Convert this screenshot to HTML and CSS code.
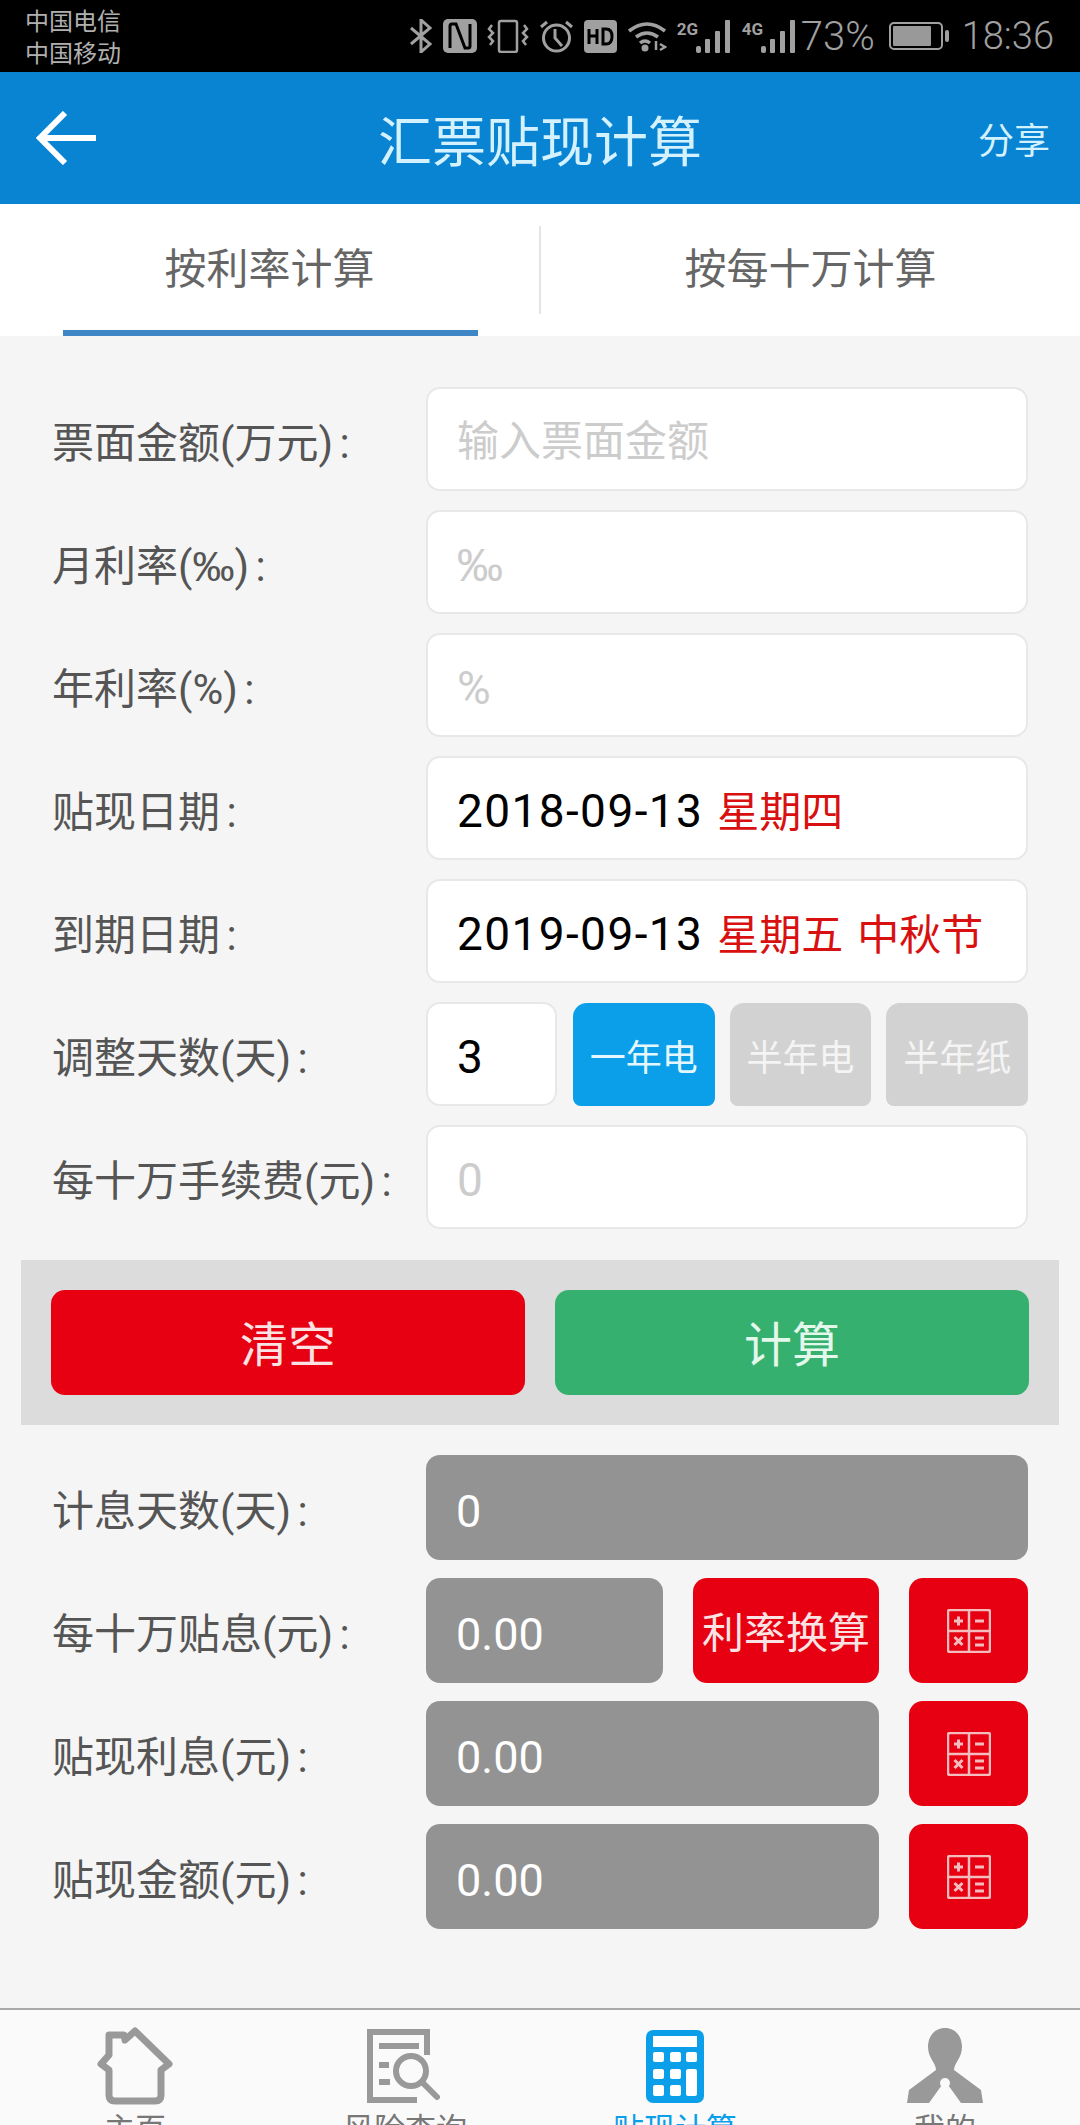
FILE: index.html
```html
<!DOCTYPE html>
<html lang="zh-CN">
<head>
    <meta charset="UTF-8">
    <meta name="viewport" content="width=device-width, initial-scale=1.0">
    <title>汇票贴现计算</title>
    <link rel="stylesheet" href="styles.css">
</head>
<body>
    <div class="app">
        <!-- 状态栏 -->
        <div class="status-bar">
            <div class="carriers">
                <div>中国电信</div>
                <div>中国移动</div>
            </div>
            <div class="status-icons">
                <svg width="24" height="34" viewBox="0 0 24 34" fill="none" stroke="#a0a0a0" stroke-width="3"><path d="M2 9 21 25 12 33V1l9 8L2 25"/></svg>
                <svg width="34" height="34" viewBox="0 0 34 34"><rect width="34" height="34" rx="5" fill="#a0a0a0"/><path d="M7 29V7q0-2 2-2h4l9 24h3q2 0 2-2V5" fill="none" stroke="#000" stroke-width="3"/></svg>
                <svg width="42" height="34" viewBox="0 0 42 34" fill="none" stroke="#a0a0a0" stroke-width="2.5"><rect x="12" y="2" width="18" height="31" rx="2"/><path d="M5 6 2 10l4 4-4 4 4 4-3 4M37 6l3 4-4 4 4 4-4 4 3 4"/></svg>
                <svg width="35" height="34" viewBox="0 0 35 34" fill="none" stroke="#a0a0a0" stroke-width="3"><circle cx="17.500" cy="19" r="13"/><path d="M16 10v9l7 8M2 8l6-5M33 8l-6-5"/></svg>
                <svg width="33" height="33" viewBox="0 0 33 33"><rect width="33" height="33" rx="4" fill="#a0a0a0"/><path d="M5 9v15M13 9v15M5 16h8M19 9v15h3q6 0 6-7.500T22 9z" fill="none" stroke="#000" stroke-width="3"/></svg>
                <svg width="40" height="32" viewBox="0 0 40 32" fill="none" stroke="#a0a0a0" stroke-width="3.500"><path d="M2 11q18-14 36 0M9 17q11-8 22 0M13 23q5-4 10 0"/><circle cx="18" cy="28" r="3.500" fill="#a0a0a0" stroke="none"/><path d="M29 21v9M33 24l5 3-5 3" stroke-width="2.500"/></svg>
                <div class="net">
                    <span>2G</span>
                    <svg width="36" height="33" viewBox="0 0 36 33" fill="#a0a0a0"><rect y="26" width="5" height="7" rx="2"/><rect x="9" y="19" width="5" height="14" rx="1"/><rect x="19" y="11" width="5" height="22" rx="1"/><rect x="29" width="5" height="33" rx="1"/></svg>
                </div>
                <div class="net">
                    <span>4G</span>
                    <svg width="36" height="33" viewBox="0 0 36 33" fill="#a0a0a0"><rect y="26" width="5" height="7" rx="2"/><rect x="9" y="19" width="5" height="14" rx="1"/><rect x="19" y="11" width="5" height="22" rx="1"/><rect x="29" width="5" height="33" rx="1"/></svg>
                </div>
                <span class="battery-text">73%</span>
                <svg width="60" height="28" viewBox="0 0 60 28"><rect x="1" y="1" width="52" height="26" rx="4" fill="none" stroke="#a0a0a0" stroke-width="2"/><rect x="4" y="4" width="38" height="20" rx="1" fill="#999"/><rect x="56" y="8" width="4" height="12" rx="2" fill="#a0a0a0"/></svg>
                <span class="time">18:36</span>
            </div>
        </div>

        <!-- 标题栏 -->
        <div class="header">
            <svg class="back" width="62" height="54" viewBox="0 0 62 54" fill="none" stroke="#fff" stroke-width="6"><path d="M60 27H4M29 2 4 27l25 25"/></svg>
            <h1>汇票贴现计算</h1>
            <a class="share">分享</a>
        </div>

        <!-- 切换 -->
        <div class="tabs">
            <div class="tab active">按利率计算</div>
            <div class="tab">按每十万计算</div>
        </div>

        <div class="main">
            <form class="rows">
                <div class="row"><label>票面金额(万元) :</label><div class="field hint">输入票面金额</div></div>
                <div class="row"><label>月利率(<span class="permille">‰</span>) :</label><div class="field hint latin"><span class="permille">‰</span></div></div>
                <div class="row"><label>年利率(%) :</label><div class="field hint latin">%</div></div>
                <div class="row"><label>贴现日期 :</label><div class="field"><span class="num">2018-09-13</span><em>星期四</em></div></div>
                <div class="row"><label>到期日期 :</label><div class="field"><span class="num">2019-09-13</span><em>星期五</em><em>中秋节</em></div></div>
                <div class="row">
                    <label>调整天数(天) :</label>
                    <div class="field days"><span class="num">3</span></div>
                    <button type="button" class="type on">一年电</button>
                    <button type="button" class="type">半年电</button>
                    <button type="button" class="type">半年纸</button>
                </div>
                <div class="row"><label>每十万手续费(元) :</label><div class="field hint latin">0</div></div>
            </form>

            <div class="actions">
                <button type="button" class="btn red">清空</button>
                <button type="button" class="btn green">计算</button>
            </div>

            <div class="rows results">
                <div class="row"><label>计息天数(天) :</label><div class="value">0</div></div>
                <div class="row">
                    <label>每十万贴息(元) :</label>
                    <div class="value">0.00</div>
                    <button type="button" class="convert">利率换算</button>
                    <button type="button" class="calc"><svg width="44" height="44" viewBox="0 0 44 44"><use href="#calc-icon"/></svg></button>
                </div>
                <div class="row">
                    <label>贴现利息(元) :</label>
                    <div class="value">0.00</div>
                    <button type="button" class="calc"><svg width="44" height="44" viewBox="0 0 44 44"><use href="#calc-icon"/></svg></button>
                </div>
                <div class="row">
                    <label>贴现金额(元) :</label>
                    <div class="value">0.00</div>
                    <button type="button" class="calc"><svg width="44" height="44" viewBox="0 0 44 44"><use href="#calc-icon"/></svg></button>
                </div>
            </div>
        </div>

        <!-- 底部导航 -->
        <div class="nav">
            <div class="nav-item">
                <svg width="76" height="78" viewBox="0 0 76 78" fill="none" stroke="#999" stroke-width="7" stroke-linejoin="round"><path d="M12 43 4 37l8-9V8h15l1 5 10-9 34 33-8 6v25q0 6-6 6H18q-6 0-6-6z"/></svg>
                <span>主页</span>
            </div>
            <div class="nav-item">
                <svg width="76" height="78" viewBox="0 0 76 78" fill="none" stroke="#999" stroke-width="6"><path d="M60 28V5H3v68h47"/><path d="M12 19h40M12 38h10M12 55h11"/><circle cx="44" cy="44" r="15"/><path d="M55 55l15 15" stroke-linecap="round"/></svg>
                <span>风险查询</span>
            </div>
            <div class="nav-item current">
                <svg width="76" height="78" viewBox="0 0 76 78"><g transform="translate(9 3)"><rect width="58" height="73" rx="7" fill="#0a9fe8"/><g fill="#fff"><rect x="7" y="6" width="44" height="11"/><rect x="7" y="22" width="11" height="10" rx="2"/><rect x="24" y="22" width="11" height="10" rx="2"/><rect x="40" y="22" width="11" height="10" rx="2"/><rect x="7" y="39" width="11" height="10" rx="2"/><rect x="24" y="39" width="11" height="10" rx="2"/><rect x="40" y="39" width="11" height="27" rx="2"/><rect x="7" y="55" width="11" height="11" rx="2"/><rect x="24" y="55" width="11" height="11" rx="2"/></g></g></svg>
                <span>贴现计算</span>
            </div>
            <div class="nav-item">
                <svg width="76" height="78" viewBox="0 0 76 78"><path d="M38 1c11 0 17 9 17 19 0 11-8 16-8 23l27 20 2 13H54L44 62l-6-8-6 8-10 14H0l2-13 27-20c0-7-8-12-8-23C21 10 27 1 38 1z" fill="#999"/><circle cx="38" cy="56" r="5" fill="#fafafa"/></svg>
                <span>我的</span>
            </div>
        </div>
    </div>

    <svg class="defs" width="0" height="0">
        <symbol id="calc-icon" viewBox="0 0 44 44">
            <g fill="none" stroke="#f5bcbd" stroke-width="2.500">
                <rect x="1" y="1" width="42" height="42" rx="2"/>
                <path d="M22 1v42M1 22h42"/>
                <path d="M7 12h9M11.500 7.500v9M28 12h9M7.500 28l8 8M15.500 28l-8 8M28 29h9M28 36h9" stroke-width="3"/>
            </g>
        </symbol>
    </svg>
</body>
</html>
```

FILE: styles.css
```css
* {
    box-sizing: border-box;
}
body {
    margin: 0;
    font-family: Roboto, "Noto Sans CJK SC", sans-serif;
    background-color: #f5f5f5;
}
.defs {
    display: block;
}
.app {
    width: 1080px;
    height: 2125px;
    overflow: hidden;
}
.status-bar {
    height: 72px;
    background-color: #000;
    color: #a0a0a0;
    display: flex;
    justify-content: space-between;
    align-items: center;
    padding: 0 26px 0 25px;
}
.carriers {
    font-size: 24px;
    line-height: 32px;
    color: #b0b0b0;
    padding-top: 3px;
}
.status-icons {
    display: flex;
    align-items: center;
    gap: 10px;
}
.net {
    display: flex;
    align-items: flex-start;
}
.net span {
    font-size: 17px;
    font-weight: 700;
    line-height: 18px;
    width: 19px;
}
.battery-text {
    font-size: 40px;
    font-weight: 300;
    margin-left: -6px;
    margin-right: 4px;
}
.time {
    font-size: 38px;
    font-weight: 300;
    margin-left: 3px;
}
.header {
    height: 132px;
    background-color: #0884d2;
    color: #fff;
    display: grid;
    grid-template-columns: 1fr auto 1fr;
    align-items: center;
    padding: 0 30px;
}
.back {
    margin-left: 6px;
}
h1 {
    margin: 0;
    font-size: 54px;
    font-weight: 400;
    color: #d4f1ff;
}
.share {
    justify-self: end;
    font-size: 36px;
    color: #d4f1ff;
}
.tabs {
    height: 132px;
    background-color: #fff;
    display: flex;
    align-items: center;
}
.tab {
    flex: 1;
    height: 88px;
    line-height: 88px;
    text-align: center;
    font-size: 42px;
    color: #666;
    position: relative;
}
.tab + .tab {
    border-left: 2px solid #e4e4e4;
}
.tab.active::after {
    content: "";
    position: absolute;
    left: 63px;
    width: 415px;
    bottom: -22px;
    height: 6px;
    background-color: #3f86c6;
}
.main {
    height: 1672px;
    padding-top: 51px;
}
.rows {
    display: flex;
    flex-direction: column;
    gap: 19px;
    padding: 0 52px;
}
.row {
    display: flex;
    align-items: center;
    height: 104px;
}
label {
    width: 374px;
    flex: none;
    font-size: 42px;
    word-spacing: -4px;
    color: #555;
    white-space: nowrap;
}
.permille {
    font-family: "Liberation Sans", sans-serif;
}
.field {
    flex: 1;
    height: 104px;
    line-height: 106px;
    padding-left: 29px;
    background-color: #fff;
    border: 2px solid #e8e8e8;
    border-radius: 14px;
    font-size: 42px;
    color: #000;
    white-space: nowrap;
}
.field em {
    font-style: normal;
    color: #d8100f;
    margin-left: 14px;
}
.num {
    font-size: 46px;
    letter-spacing: 1.4px;
}
.hint {
    color: #ccc;
}
.latin {
    font-size: 46px;
}
.days {
    flex: none;
    width: 131px;
    margin-right: 16px;
}
.type {
    width: 142px;
    height: 103px;
    align-self: flex-end;
    border: none;
    border-radius: 14px 14px 8px 8px;
    background-color: #d2d2d2;
    color: #f4f4f4;
    font-family: inherit;
    font-size: 36px;
    padding: 0;
}
.type + .type {
    margin-left: 15px;
}
.type.on {
    background-color: #0a9fe8;
    color: #e4f7ff;
}
.actions {
    margin: 31px 21px 0;
    height: 165px;
    padding: 30px;
    background-color: #dcdcdc;
    display: flex;
    gap: 30px;
}
.btn {
    flex: 1;
    border: none;
    border-radius: 14px;
    font-family: inherit;
    font-size: 48px;
    padding: 0 0 4px;
}
.red {
    background-color: #e60012;
    color: #fbe3e3;
}
.green {
    background-color: #35b06e;
    color: #e3f7ea;
}
.results {
    margin-top: 30px;
    gap: 18px;
}
.results .row {
    height: 105px;
    gap: 30px;
}
.results label {
    margin-right: -30px;
}
.value {
    flex: 1;
    height: 105px;
    line-height: 113px;
    padding-left: 30px;
    background-color: #939393;
    border-radius: 14px;
    color: #fff;
    font-size: 45px;
}
.convert,
.calc {
    flex: none;
    height: 105px;
    border: none;
    border-radius: 14px;
    background-color: #e60012;
    color: #fbe3e3;
    padding: 0;
}
.convert {
    width: 186px;
    font-family: inherit;
    font-size: 42px;
    padding-bottom: 2px;
}
.calc {
    width: 119px;
    display: flex;
    align-items: center;
    justify-content: center;
}
.nav {
    height: 117px;
    border-top: 2px solid #aaa;
    background-color: #fafafa;
    display: flex;
    padding-top: 17px;
}
.nav-item {
    width: 270px;
    display: flex;
    flex-direction: column;
    align-items: center;
    font-size: 31px;
    line-height: 40px;
    color: #777;
}
.nav-item svg {
    flex: none;
}
.nav-item span {
    margin-top: 5px;
}
.nav-item.current {
    color: #0a9fe8;
}
```
